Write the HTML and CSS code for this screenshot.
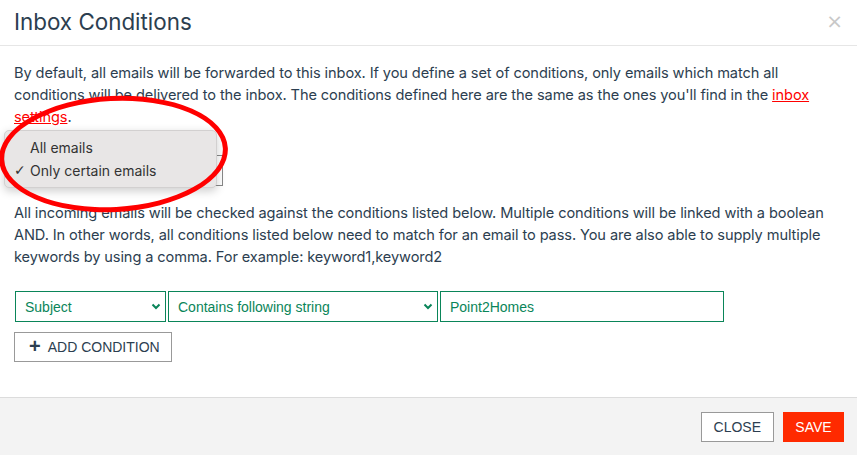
FILE: index.html
```html
<!DOCTYPE html>
<html lang="en">
<head>
    <meta charset="UTF-8">
    <title>Inbox Conditions</title>
    <link rel="stylesheet" href="styles.css">
</head>
<body>
    <div class="dialog">
        <header class="dialog-header">
            <h1>Inbox Conditions</h1>
            <span class="close-x">&times;</span>
        </header>

        <section class="dialog-body">
            <p class="intro">By default, all emails will be forwarded to this inbox. If you define a set of conditions, only emails which match all conditions will be delivered to the inbox. The conditions defined here are the same as the ones you'll find in the <a href="#">inbox settings</a>.</p>

            <div class="mode-picker">
                <div class="mode-select"></div>
                <ul class="mode-menu">
                    <li>All emails</li>
                    <li class="checked">Only certain emails</li>
                </ul>
                <div class="circle-mark"></div>
            </div>

            <p class="explain">All incoming emails will be checked against the conditions listed below. Multiple conditions will be linked with a boolean AND. In other words, all conditions listed below need to match for an email to pass. You are also able to supply multiple keywords by using a comma. For example: keyword1,keyword2</p>

            <div class="condition-row">
                <div class="field field-select field-subject">Subject
                    <svg width="10" height="7" viewBox="0 0 10 7"><path d="M1.5 1.5 L5 5 L8.5 1.5" fill="none" stroke="#0a8559" stroke-width="2"/></svg>
                </div>
                <div class="field field-select field-op">Contains following string
                    <svg width="10" height="7" viewBox="0 0 10 7"><path d="M1.5 1.5 L5 5 L8.5 1.5" fill="none" stroke="#0a8559" stroke-width="2"/></svg>
                </div>
                <div class="field field-value">Point2Homes</div>
            </div>

            <button class="btn btn-add"><span class="plus">+</span>ADD CONDITION</button>
        </section>

        <footer class="dialog-footer">
            <button class="btn">CLOSE</button>
            <button class="btn btn-save">SAVE</button>
        </footer>
    </div>
</body>
</html>
```

FILE: styles.css
```css
/* General Styles */
body {
    margin: 0;
    padding: 0;
    background-color: #fff;
    font-family: Inter, "Open Sans", sans-serif;
    color: #2c3e50;
}

.dialog {
    width: 857px;
    height: 455px;
    display: flex;
    flex-direction: column;
    overflow: hidden;
}

.dialog-header {
    height: 45px;
    border-bottom: 1px solid #e6e6e6;
    display: flex;
    justify-content: space-between;
    align-items: center;
    padding: 0 14px;
}

.dialog-header h1 {
    margin: 0;
    font-size: 22.4px;
    font-weight: 400;
    color: #2c3e50;
    margin-top: -3px;
}

.close-x {
    color: #c8c8c8;
    font-size: 20px;
    font-family: "DejaVu Sans", sans-serif;
    margin-top: -4px;
}

.dialog-body {
    flex: 1;
    padding: 16px 14px 0;
}

.intro,
.explain {
    margin: 0;
    font-size: 14.6px;
    line-height: 22px;
    letter-spacing: -0.1px;
}

.intro a {
    color: #ff0000;
}

/* the open native dropdown, circled in red */
.mode-picker {
    position: relative;
    height: 64px;
    margin-top: 2px;
}

.mode-select {
    position: absolute;
    left: 0;
    top: 25px;
    width: 209px;
    height: 31px;
    border: 1px solid #888;
    box-sizing: border-box;
}

.mode-menu {
    position: absolute;
    left: -10px;
    top: 0;
    width: 211px;
    margin: 0;
    padding: 5px 0;
    list-style: none;
    background-color: #e8e6e6;
    border: 1px solid #d2d0d0;
    border-radius: 5px;
    box-shadow: 0 3px 10px rgba(0, 0, 0, 0.2);
    font-size: 14px;
    color: #333;
}

.mode-menu li {
    padding: 0 0 0 25px;
    line-height: 23px;
    position: relative;
}

.mode-menu li.checked::before {
    content: "\2713";
    position: absolute;
    left: 9px;
    font-family: "DejaVu Sans", sans-serif;
    font-size: 14px;
    font-weight: bold;
}

.circle-mark {
    position: absolute;
    left: -15px;
    top: -34px;
    width: 229px;
    height: 116px;
    box-sizing: border-box;
    border: 5px solid #ff0000;
    border-radius: 50%;
    transform: rotate(-3deg);
}

.explain {
    margin-top: 8px;
}

.condition-row {
    display: flex;
    gap: 2px;
    margin-top: 23px;
}

.field {
    height: 31px;
    box-sizing: border-box;
    border: 1px solid #0a8559;
    color: #0a8559;
    font-family: "Liberation Sans", Arial, sans-serif;
    font-size: 14px;
    display: flex;
    align-items: center;
    padding: 0 9px;
}

.field-select {
    justify-content: space-between;
    padding-right: 4px;
}

.field-subject {
    width: 151px;
    margin-left: 1px;
}

.field-op {
    width: 270px;
}

.field-value {
    width: 284px;
}

.btn {
    height: 30px;
    border: 1px solid #999;
    background-color: #fff;
    color: #2c3e50;
    font-family: "Liberation Sans", Arial, sans-serif;
    font-size: 14px;
    padding: 0 12px;
    white-space: nowrap;
    cursor: pointer;
}

.btn-add {
    margin-top: 10px;
    width: 158px;
    display: flex;
    align-items: center;
    padding: 0 0 0 14px;
}

.plus {
    font-size: 20px;
    font-weight: bold;
    margin-right: 7px;
    margin-top: -2px;
}

.dialog-footer {
    height: 57px;
    background-color: #f3f3f3;
    border-top: 1px solid #dcdcdc;
    display: flex;
    justify-content: flex-end;
    align-items: center;
    gap: 9px;
    padding: 0 13px;
}

.dialog-footer .btn {
    margin-top: 1px;
}

.btn-save {
    background-color: #ff2a00;
    border-color: #ff2a00;
    color: #fff;
    width: 61px;
    padding: 0;
}
```
